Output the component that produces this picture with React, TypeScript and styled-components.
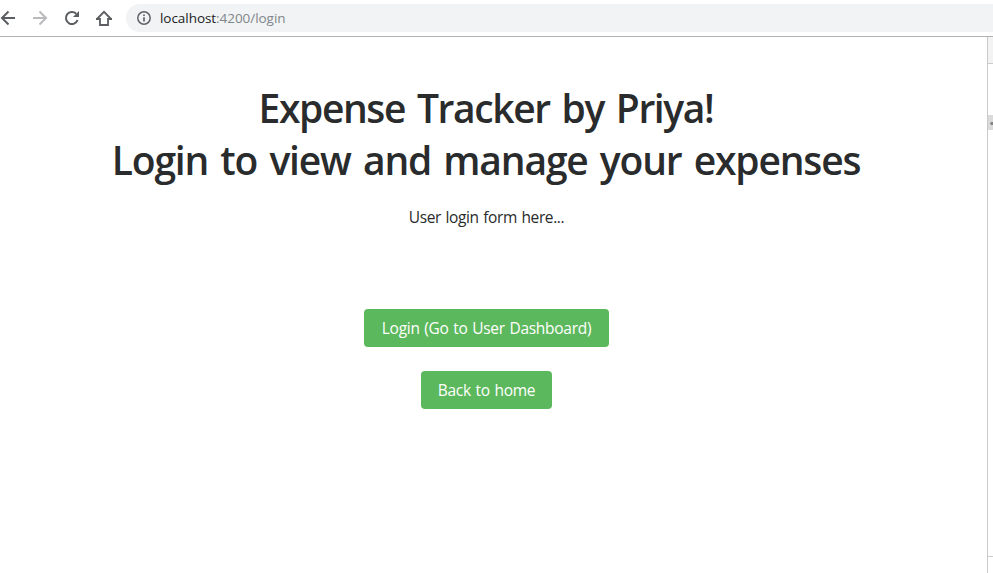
import React from "react";
import styled, { createGlobalStyle } from "styled-components";

const GlobalStyle = createGlobalStyle`
  * { box-sizing: border-box; }
  html, body { margin: 0; padding: 0; background: #fff; overflow: hidden; }
`;

const Browser = styled.div`
  display: flex;
  flex-direction: column;
  width: 993px;
  height: 573px;
  background: #fff;
  font-family: "Open Sans", "Noto Sans", sans-serif;
`;

const Toolbar = styled.header`
  display: flex;
  align-items: center;
  flex: none;
  height: 37px;
  padding-bottom: 1px;
  border-bottom: 1px solid #b1b1b3;
`;

const Navigation = styled.nav`
  display: flex;
  gap: 16px;
  width: 126px;
`;

const NavButton = styled.button<{ $muted?: boolean }>`
  display: flex;
  width: 16px;
  height: 16px;
  padding: 0;
  border: 0;
  background: none;
  color: ${(p) => (p.$muted ? "#bababc" : "#5a5d61")};
`;

const AddressBar = styled.div`
  display: flex;
  align-items: center;
  flex: 1;
  height: 28px;
  padding-left: 10px;
  border-radius: 14px 0 0 14px;
  background: #f1f3f4;
  color: #5f6368;
`;

const Url = styled.span`
  margin-left: 8px;
  color: #80868b;
  font-size: 13.5px;
  line-height: 20px;
  letter-spacing: -0.05px;
  white-space: nowrap;
`;

const Host = styled.span`
  color: #202124;
`;

const Viewport = styled.div`
  display: flex;
  flex: 1;
  min-height: 0;
`;

const Page = styled.main`
  display: flex;
  flex-direction: column;
  align-items: center;
  width: 987px;
  padding: 45px 14px 0 0;
  color: #292b2c;
`;

const Title = styled.h1`
  display: flex;
  flex-direction: column;
  align-items: center;
  margin: 0;
  font-size: 39px;
  font-weight: 600;
  line-height: 52px;
  white-space: nowrap;
`;

const TitleLine = styled.span<{ $tracking: number }>`
  letter-spacing: ${(p) => p.$tracking}px;
  word-spacing: 3.2px;
  margin-right: 1px;
`;

const Message = styled.p`
  margin: 18px 0 79px;
  font-size: 15.5px;
  line-height: 26px;
  letter-spacing: -0.38px;
  word-spacing: 0.9px;
  white-space: nowrap;
`;

const Actions = styled.div`
  display: flex;
  flex-direction: column;
  align-items: center;
  gap: 24px;
`;

const ActionButton = styled.button<{ $width: number }>`
  width: ${(p) => p.$width}px;
  height: 38px;
  padding: 0;
  border: 0;
  border-radius: 4px;
  background: #5cb85c;
  color: #fff;
  font: 400 15.5px/38px "Open Sans", "Noto Sans", sans-serif;
  letter-spacing: -0.28px;
  word-spacing: 0.9px;
  white-space: nowrap;
`;

const DevPanel = styled.aside`
  display: flex;
  flex-direction: column;
  width: 6px;
  border-left: 1px solid #cacaca;
`;

const PanelHeader = styled.div`
  height: 27px;
  border-bottom: 1px solid #cccccc;
  background: #f3f3f3;
`;

const PanelBody = styled.div`
  height: 493px;
  padding-top: 51px;
  border-bottom: 1px solid #cccccc;
`;

const PanelHandle = styled.div`
  display: flex;
  align-items: center;
  justify-content: flex-end;
  height: 15px;
  padding-top: 2px;
  background: #dadada;
`;

export default function App() {
  return (
    <Browser>
      <GlobalStyle />
      <Toolbar>
        <Navigation>
          <NavButton aria-label="Back">
            <svg width="16" height="16" viewBox="0 0 16 16" fill="none" stroke="currentColor" strokeWidth="2">
              <path d="M15 8H2M8.5 1.5L2 8l6.5 6.5" />
            </svg>
          </NavButton>
          <NavButton aria-label="Forward" $muted>
            <svg width="16" height="16" viewBox="0 0 16 16" fill="none" stroke="currentColor" strokeWidth="2">
              <path d="M1 8h13M7.5 1.5L14 8l-6.5 6.5" />
            </svg>
          </NavButton>
          <NavButton aria-label="Reload">
            <svg width="16" height="16" viewBox="0 0 16 16" fill="none" stroke="currentColor" strokeWidth="2">
              <path d="M13.6 10A6 6 0 1 1 12.2 3.8" />
              <path d="M15 1v6H9z" fill="currentColor" stroke="none" />
            </svg>
          </NavButton>
          <NavButton aria-label="Home">
            <svg width="16" height="16" viewBox="0 0 16 16" fill="none" stroke="currentColor" strokeWidth="2">
              <path d="M1 9L8 1.8 15 9M0 9h4v6h8V9h4" strokeWidth="1.8" />
            </svg>
          </NavButton>
        </Navigation>
        <AddressBar>
          <svg width="16" height="16" viewBox="0 0 16 16" fill="none" stroke="currentColor">
            <circle cx="8" cy="8" r="6.2" strokeWidth="1.5" />
            <path d="M8 7.2v4.3M8 4.4V6" strokeWidth="1.7" />
          </svg>
          <Url><Host>localhost</Host>:4200/login</Url>
        </AddressBar>
      </Toolbar>
      <Viewport>
        <Page>
          <Title>
            <TitleLine $tracking={-1.4}>Expense Tracker by Priya!</TitleLine>
            <TitleLine $tracking={-1.16}>Login to view and manage your expenses</TitleLine>
          </Title>
          <Message>User login form here...</Message>
          <Actions>
            <ActionButton $width={245}>Login (Go to User Dashboard)</ActionButton>
            <ActionButton $width={131}>Back to home</ActionButton>
          </Actions>
        </Page>
        <DevPanel>
          <PanelHeader />
          <PanelBody>
            <PanelHandle>
              <svg width="3" height="3" viewBox="0 0 3 3" fill="#858585">
                <path d="M0 1.5L1 0h2v3H1z" />
              </svg>
            </PanelHandle>
          </PanelBody>
        </DevPanel>
      </Viewport>
    </Browser>
  );
}
